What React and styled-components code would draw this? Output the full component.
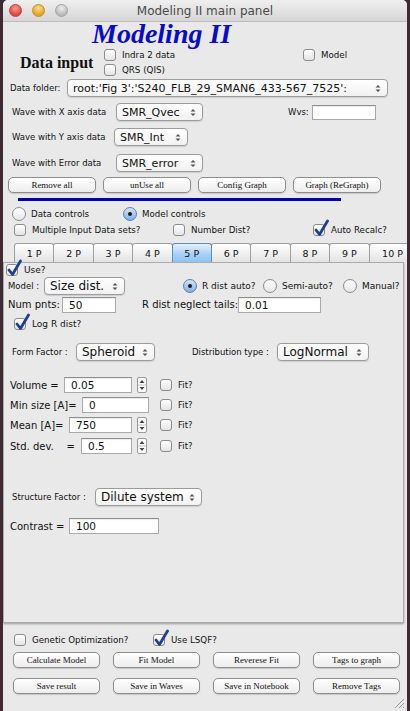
import React from 'react'
import styled, { createGlobalStyle } from 'styled-components'

const GlobalStyle = createGlobalStyle`
  html, body {
    margin: 0;
    padding: 0;
    background: #3d2a33;
  }
  * { box-sizing: border-box; }
`

const UI = `"DejaVu Sans", "Liberation Sans", sans-serif`
const SERIF = `"Liberation Serif", "DejaVu Serif", serif`

const Window = styled.div`
  position: relative;
  width: 404px;
  height: 711px;
  margin-left: 3px;
  background: #e9e9e9;
  border-radius: 5px 5px 0 0;
  overflow: hidden;
  font-family: ${UI};
  color: #111;
`

const TitleBar = styled.div`
  height: 22px;
  display: grid;
  grid-template-columns: 1fr auto 1fr;
  align-items: center;
  background: linear-gradient(#efefef, #d6d6d6);
  border-bottom: 1px solid #bdbdbd;
`

const Lights = styled.div`
  display: flex;
  gap: 10px;
  padding-left: 6px;
`

const Light = styled.span`
  width: 13px;
  height: 13px;
  border-radius: 50%;
  background: radial-gradient(circle at 50% 30%, ${p => p.$hi} 0%, ${p => p.$c} 70%);
  border: 1px solid ${p => p.$b};
`

const WinTitle = styled.div`
  font-size: 12px;
  color: #4a4a4a;
  white-space: nowrap;
`

const BigTitle = styled.div`
  height: 26px;
  line-height: 24px;
  padding-left: 89px;
  font-family: ${SERIF};
  font-weight: bold;
  font-style: italic;
  font-size: 28px;
  color: #0a0acb;
`

const Row = styled.div`
  display: flex;
  align-items: center;
  height: ${p => p.$h}px;
  margin-top: ${p => p.$mt || 0}px;
  padding-left: ${p => p.$pl || 0}px;
  gap: ${p => p.$gap || 0}px;
`

const HeaderRow = styled.div`
  display: flex;
  height: 30px;
`

const SectionLabel = styled.div`
  width: 101px;
  padding: 7px 0 0 17px;
  font-family: ${SERIF};
  font-weight: bold;
  font-size: 16px;
  line-height: 16px;
`

const CheckColumn = styled.div`
  width: ${p => p.$w}px;
  display: flex;
  flex-direction: column;
  gap: 1px;
`

const Label = styled.div`
  flex: none;
  width: ${p => (p.$w ? `${p.$w}px` : 'auto')};
  margin-left: ${p => p.$ml || 0}px;
  font-size: ${p => p.$fs || 8.5}px;
  white-space: nowrap;
`

const PopupBox = styled.div`
  flex: none;
  position: relative;
  display: flex;
  align-items: center;
  width: ${p => p.$w}px;
  height: 18px;
  padding: 0 16px 0 5px;
  border: 1px solid #9c9c9c;
  border-radius: 4px;
  background: linear-gradient(#ffffff, #f1f1f1);
  box-shadow: 0 1px 1px rgba(0, 0, 0, 0.12);
  font-size: ${p => p.$fs || 11}px;
  white-space: nowrap;
  overflow: hidden;
`

const Arrows = styled.svg`
  position: absolute;
  right: 6px;
  top: 4px;
`

const Popup = ({ w, fs, children }) => (
  <PopupBox $w={w} $fs={fs}>
    {children}
    <Arrows width="6" height="9" viewBox="0 0 6 9">
      <path d="M0.5 3.5 L3 1 L5.5 3.5 Z M0.5 5.5 L3 8 L5.5 5.5 Z" fill="#555" />
    </Arrows>
  </PopupBox>
)

const Field = styled.div`
  flex: none;
  width: ${p => p.$w}px;
  height: ${p => p.$h || 16}px;
  margin-left: ${p => p.$ml || 0}px;
  padding-left: 6px;
  background: #fff;
  border: 1px solid #a9a9a9;
  border-top-color: #8e8e8e;
  box-shadow: inset 0 1px 1px rgba(0, 0, 0, 0.08);
  font-size: 10.5px;
  line-height: 14px;
  white-space: nowrap;
`

const StepperBox = styled.svg`
  flex: none;
  margin-left: 5px;
`

const Stepper = () => (
  <StepperBox width="10" height="16" viewBox="0 0 10 16">
    <rect x="0.5" y="0.5" width="9" height="15" rx="1.5" fill="#fbfbfb" stroke="#9a9a9a" />
    <line x1="1" y1="8" x2="9" y2="8" stroke="#c4c4c4" />
    <path d="M2.5 6 L5 3 L7.5 6 Z M2.5 10 L5 13 L7.5 10 Z" fill="#444" />
  </StepperBox>
)

const Button = styled.div`
  flex: none;
  width: ${p => p.$w}px;
  height: 16px;
  display: flex;
  align-items: center;
  justify-content: center;
  border: 1px solid #8d8d8d;
  border-radius: 5px;
  background: linear-gradient(#ffffff, #ededed);
  box-shadow: 0 1px 1px rgba(0, 0, 0, 0.15);
  font-family: ${SERIF};
  font-size: 9px;
  white-space: nowrap;
`

const CheckItem = styled.div`
  flex: none;
  display: flex;
  align-items: center;
  height: 14px;
  width: ${p => (p.$w ? `${p.$w}px` : 'auto')};
  margin-left: ${p => p.$ml || 0}px;
  font-size: ${p => p.$fs || 8.7}px;
  white-space: nowrap;
`

const Box = styled.span`
  position: relative;
  flex: none;
  width: 12px;
  height: 12px;
  margin-right: ${p => p.$gap || 6}px;
  border: 1px solid #8c8c8c;
  border-radius: 3px;
  background: linear-gradient(#ffffff, #e4e4e4);
`

const Tick = styled.svg`
  position: absolute;
  left: -1px;
  top: -6px;
`

const Check = ({ checked, label, w, ml, gap, fs }) => (
  <CheckItem $w={w} $ml={ml} $fs={fs}>
    <Box $gap={gap}>
      {checked && (
        <Tick width="16" height="18" viewBox="0 0 16 18">
          <path d="M3 11 L6.5 15.5 L14.5 2" fill="none" stroke="#20408f" strokeWidth="2.8" strokeLinecap="round" strokeLinejoin="round" />
        </Tick>
      )}
    </Box>
    {label}
  </CheckItem>
)

const Circle = styled.span`
  flex: none;
  display: flex;
  align-items: center;
  justify-content: center;
  width: 14px;
  height: 14px;
  margin-right: 5px;
  border-radius: 50%;
  border: 1px solid ${p => (p.$on ? '#5b7fb5' : '#8c8c8c')};
  background: ${p => (p.$on ? 'linear-gradient(#d4e5f8, #7fb0e6)' : 'linear-gradient(#ffffff, #e6e6e6)')};
  &::after {
    content: '';
    display: ${p => (p.$on ? 'block' : 'none')};
    width: 4px;
    height: 4px;
    border-radius: 50%;
    background: #1b1b1b;
  }
`

const Radio = ({ on, label, w, ml, fs }) => (
  <CheckItem $w={w} $ml={ml} $fs={fs}>
    <Circle $on={on} />
    {label}
  </CheckItem>
)

const BlueLine = styled.div`
  width: 323px;
  height: 3px;
  margin: 5px 0 0 15px;
  background: #0000b5;
`

const Tabs = styled.div`
  display: flex;
  height: 19px;
  margin-top: 6px;
  padding-left: 11px;
`

const Tab = styled.div`
  flex: none;
  width: ${p => (p.$last ? 48 : 40.4)}px;
  height: 19px;
  margin-right: -1px;
  display: flex;
  align-items: center;
  justify-content: center;
  border: 1px solid ${p => (p.$on ? '#5a8dc8' : '#9f9f9f')};
  border-bottom: none;
  border-radius: 3px 3px 0 0;
  background: ${p => (p.$on ? 'linear-gradient(#e4f1fc, #a9d2f5 55%, #8fc3f1)' : 'linear-gradient(#ffffff, #e3e3e3)')};
  position: relative;
  z-index: ${p => (p.$on ? 1 : 0)};
  font-size: 9.5px;
  white-space: nowrap;
`

const Panel = styled.div`
  width: 401px;
  height: 361px;
  border: 1px solid #ababab;
  background: #e9e9e9;
  box-shadow: 0 1px 2px rgba(0, 0, 0, 0.35);
`

const FieldGroup = styled.div`
  flex: none;
  display: flex;
  align-items: center;
  width: 150px;
`

const Grip = styled.svg`
  position: absolute;
  right: 2px;
  bottom: 2px;
`

const tabs = ['1 P', '2 P', '3 P', '4 P', '5 P', '6 P', '7 P', '8 P', '9 P', '10 P']

const params = [
  { label: 'Volume =', lw: 54, value: '0.05', fw: 68, step: true, mt: 16 },
  { label: 'Min size [A]=', lw: 72, value: '0', fw: 67, step: false, mt: 4 },
  { label: 'Mean [A]=', lw: 59, value: '750', fw: 63, step: true, mt: 4 },
  { label: 'Std. dev.    =', lw: 71, value: '0.5', fw: 51, step: true, mt: 5 },
]

export default function App() {
  return (
    <>
      <GlobalStyle />
      <Window>
        <TitleBar>
          <Lights>
            <Light $c="#e0443e" $hi="#ff9a94" $b="#c1403a" />
            <Light $c="#e3a126" $hi="#ffdf8a" $b="#c98d25" />
            <Light $c="#b9b9b9" $hi="#eeeeee" $b="#a3a3a3" />
          </Lights>
          <WinTitle>Modeling II main panel</WinTitle>
          <div />
        </TitleBar>

        <BigTitle>Modeling II</BigTitle>

        <HeaderRow>
          <SectionLabel>Data input</SectionLabel>
          <CheckColumn $w={199}>
            <Check label="Indra 2 data" />
            <Check label="QRS (QIS)" />
          </CheckColumn>
          <CheckColumn $w={80}>
            <Check label="Model" />
          </CheckColumn>
        </HeaderRow>

        <Row $h={18} $mt={1} $pl={7}>
          <Label $w={57}>Data folder:</Label>
          <Popup w={321} fs={11}>root:'Fig 3':'S240_FLB_29_SMAN6_433-567_7525':</Popup>
        </Row>

        <Row $h={18} $mt={6} $pl={9}>
          <Label $w={104}>Wave with X axis data</Label>
          <Popup w={87}>SMR_Qvec</Popup>
          <Label $w={24} $ml={85}>Wvs:</Label>
          <Field $w={64} $h={15} />
        </Row>

        <Row $h={18} $mt={7} $pl={9}>
          <Label $w={102}>Wave with Y axis data</Label>
          <Popup w={74}>SMR_Int</Popup>
        </Row>

        <Row $h={18} $mt={8} $pl={9}>
          <Label $w={104}>Wave with Error data</Label>
          <Popup w={87}>SMR_error</Popup>
        </Row>

        <Row $h={16} $mt={5} $pl={5} $gap={7}>
          <Button $w={88}>Remove all</Button>
          <Button $w={88}>unUse all</Button>
          <Button $w={88}>Config Graph</Button>
          <Button $w={88}>Graph (ReGraph)</Button>
        </Row>

        <BlueLine />

        <Row $h={14} $mt={6} $pl={9}>
          <Radio label="Data controls" w={111} />
          <Radio on label="Model controls" />
        </Row>

        <Row $h={14} $mt={2} $pl={11}>
          <Check label="Multiple Input Data sets?" w={159} />
          <Check label="Number Dist?" w={140} />
          <Check checked label="Auto Recalc?" />
        </Row>

        <Tabs>
          {tabs.map((t, i) => (
            <Tab key={t} $on={t === '5 P'} $last={i === tabs.length - 1}>{t}</Tab>
          ))}
        </Tabs>

        <Panel>
          <Row $h={14} $pl={2}>
            <Check checked label="Use?" fs={9} />
          </Row>

          <Row $h={18} $pl={4}>
            <Label $w={36}>Model :</Label>
            <Popup w={81} fs={12}>Size dist.</Popup>
            <Radio on label="R dist auto?" w={80} ml={58} fs={9} />
            <Radio label="Semi-auto?" w={80} fs={9} />
            <Radio label="Manual?" fs={9} />
          </Row>

          <Row $h={17} $mt={1} $pl={4}>
            <Label $w={54} $fs={10}>Num pnts:</Label>
            <Field $w={54}>50</Field>
            <Label $w={96} $ml={26} $fs={10}>R dist neglect tails:</Label>
            <Field $w={83}>0.01</Field>
          </Row>

          <Row $h={14} $mt={4} $pl={10}>
            <Check checked label="Log R dist?" fs={9} />
          </Row>

          <Row $h={18} $mt={12} $pl={8}>
            <Label $w={64}>Form Factor :</Label>
            <Popup w={79} fs={12}>Spheroid</Popup>
            <Label $w={85} $ml={37}>Distribution type :</Label>
            <Popup w={92} fs={12}>LogNormal</Popup>
          </Row>

          {params.map(p => (
            <Row key={p.label} $h={16} $mt={p.mt} $pl={6}>
              <FieldGroup>
                <Label $w={p.lw} $fs={10}>{p.label.replace(/ /g, '\u00a0')}</Label>
                <Field $w={p.fw}>{p.value}</Field>
                {p.step && <Stepper />}
              </FieldGroup>
              <Check label="Fit?" fs={8.5} />
            </Row>
          ))}

          <Row $h={18} $mt={34} $pl={8}>
            <Label $w={83}>Structure Factor :</Label>
            <Popup w={107} fs={12}>Dilute system</Popup>
          </Row>

          <Row $h={16} $mt={12} $pl={6}>
            <Label $w={59} $fs={10}>Contrast =</Label>
            <Field $w={90}>100</Field>
          </Row>
        </Panel>

        <Row $h={14} $mt={10} $pl={11}>
          <Check label="Genetic Optimization?" w={139} />
          <Check checked label="Use LSQF?" />
        </Row>

        <Row $h={16} $mt={5} $pl={10} $gap={13}>
          <Button $w={87}>Calculate Model</Button>
          <Button $w={87}>Fit Model</Button>
          <Button $w={87}>Reverese Fit</Button>
          <Button $w={87}>Tags to graph</Button>
        </Row>

        <Row $h={16} $mt={10} $pl={10} $gap={13}>
          <Button $w={87}>Save result</Button>
          <Button $w={87}>Save in Waves</Button>
          <Button $w={87}>Save in Notebook</Button>
          <Button $w={87}>Remove Tags</Button>
        </Row>

        <Grip width="12" height="12" viewBox="0 0 12 12">
          <path d="M11 2 L2 11 M11 6 L6 11 M11 10 L10 11" stroke="#9a9a9a" strokeWidth="1" />
        </Grip>
      </Window>
    </>
  )
}
